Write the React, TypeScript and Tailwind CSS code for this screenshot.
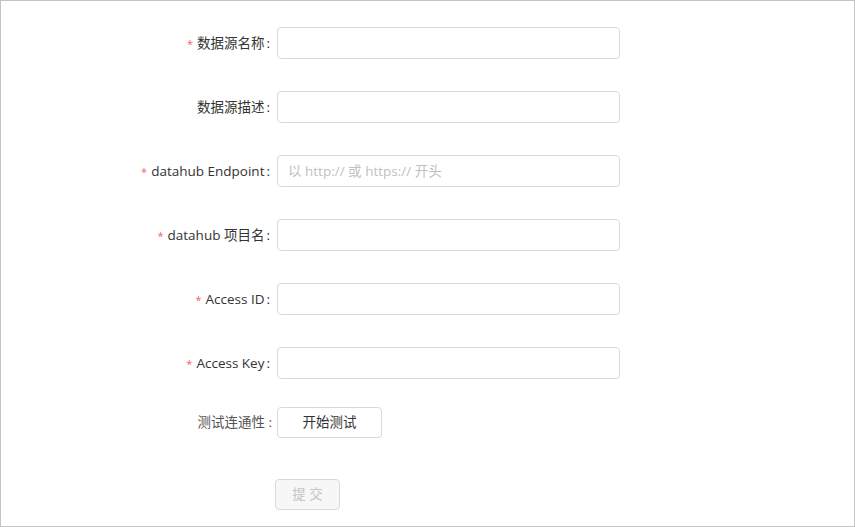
import React from "react";

const font = { fontFamily: '"Segoe UI", "Open Sans", "Noto Sans CJK SC", sans-serif' };

function Label({ text, required }: { text: string; required?: boolean }) {
  return (
    <div className="w-[272px] shrink-0 text-right text-[13.5px] text-[#333]">
      {required && <span className="mr-[4px] text-[11px] text-[#f5616a]">*</span>}
      {text}
      <span className="ml-[2px] mr-[3px]">:</span>
    </div>
  );
}

function Row({ label, required, placeholder }: { label: string; required?: boolean; placeholder?: string }) {
  return (
    <div className="flex h-[32px] items-center mb-[32px]">
      <Label text={label} required={required} />
      <div className="ml-[4px] h-[32px] w-[343px] rounded-[4px] border border-[#d9d9d9] bg-white px-[10px] flex items-center text-[13.5px] text-[#bfbfbf]">
        {placeholder}
      </div>
    </div>
  );
}

export default function App() {
  return (
    <div className="h-[527px] w-[855px] border border-[#c4c4c4] bg-white" style={font}>
      <div className="pt-[26px]">
        <Row label="数据源名称" required />
        <Row label="数据源描述" />
        <Row label="datahub Endpoint" required placeholder="以 http:// 或 https:// 开头" />
        <Row label="datahub 项目名" required />
        <Row label="Access ID" required />
        <Row label="Access Key" required />
        <div className="mt-[-4px] flex h-[31px] items-center">
          <div className="w-[272px] shrink-0 pr-[1px] text-right text-[13.5px] text-[#555]">测试连通性 :</div>
          <div className="ml-[4px] flex h-[31px] w-[105px] items-center justify-center rounded-[4px] border border-[#d9d9d9] bg-white text-[13.5px] text-[#333]">
            开始测试
          </div>
        </div>
        <div className="mt-[41px] ml-[274px] flex h-[31px] w-[65px] items-center justify-center rounded-[4px] border border-[#d9d9d9] bg-[#f7f7f7] text-[13.5px] text-[#c4c4c4]">
          提 交
        </div>
      </div>
    </div>
  );
}
